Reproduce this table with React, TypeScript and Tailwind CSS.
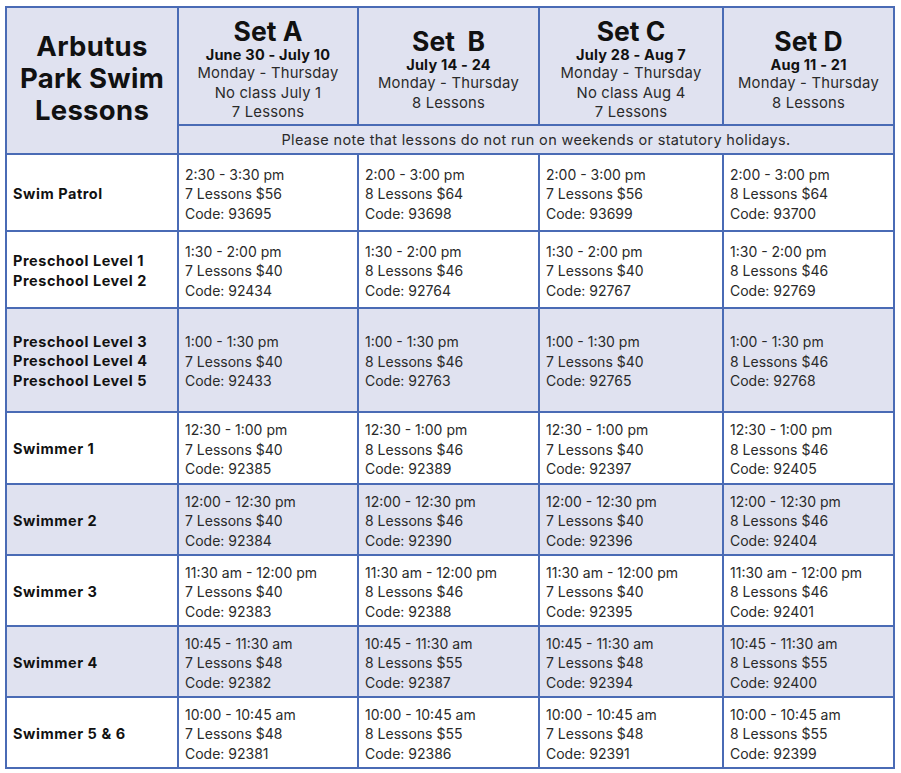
import React from "react";

type Cell = [string, string, string];

type Row = {
  label: string[];
  shaded: boolean;
  height: string;
  cells: Cell[];
};

const rows: Row[] = [
  {
    label: ["Swim Patrol"],
    shaded: false,
    height: "h-[77px]",
    cells: [
      ["2:30 - 3:30 pm", "7 Lessons $56", "Code: 93695"],
      ["2:00 - 3:00 pm", "8 Lessons $64", "Code: 93698"],
      ["2:00 - 3:00 pm", "7 Lessons $56", "Code: 93699"],
      ["2:00 - 3:00 pm", "8 Lessons $64", "Code: 93700"],
    ],
  },
  {
    label: ["Preschool Level 1", "Preschool Level 2"],
    shaded: false,
    height: "h-[77px]",
    cells: [
      ["1:30 - 2:00 pm", "7 Lessons $40", "Code: 92434"],
      ["1:30 - 2:00 pm", "8 Lessons $46", "Code: 92764"],
      ["1:30 - 2:00 pm", "7 Lessons $40", "Code: 92767"],
      ["1:30 - 2:00 pm", "8 Lessons $46", "Code: 92769"],
    ],
  },
  {
    label: ["Preschool Level 3", "Preschool Level 4", "Preschool Level 5"],
    shaded: true,
    height: "h-[104px]",
    cells: [
      ["1:00 - 1:30 pm", "7 Lessons $40", "Code: 92433"],
      ["1:00 - 1:30 pm", "8 Lessons $46", "Code: 92763"],
      ["1:00 - 1:30 pm", "7 Lessons $40", "Code: 92765"],
      ["1:00 - 1:30 pm", "8 Lessons $46", "Code: 92768"],
    ],
  },
  {
    label: ["Swimmer 1"],
    shaded: false,
    height: "h-[72px]",
    cells: [
      ["12:30 - 1:00 pm", "7 Lessons $40", "Code: 92385"],
      ["12:30 - 1:00 pm", "8 Lessons $46", "Code: 92389"],
      ["12:30 - 1:00 pm", "7 Lessons $40", "Code: 92397"],
      ["12:30 - 1:00 pm", "8 Lessons $46", "Code: 92405"],
    ],
  },
  {
    label: ["Swimmer 2"],
    shaded: true,
    height: "h-[71px]",
    cells: [
      ["12:00 - 12:30 pm", "7 Lessons $40", "Code: 92384"],
      ["12:00 - 12:30 pm", "8 Lessons $46", "Code: 92390"],
      ["12:00 - 12:30 pm", "7 Lessons $40", "Code: 92396"],
      ["12:00 - 12:30 pm", "8 Lessons $46", "Code: 92404"],
    ],
  },
  {
    label: ["Swimmer 3"],
    shaded: false,
    height: "h-[71px]",
    cells: [
      ["11:30 am - 12:00 pm", "7 Lessons $40", "Code: 92383"],
      ["11:30 am - 12:00 pm", "8 Lessons $46", "Code: 92388"],
      ["11:30 am - 12:00 pm", "7 Lessons $40", "Code: 92395"],
      ["11:30 am - 12:00 pm", "8 Lessons $46", "Code: 92401"],
    ],
  },
  {
    label: ["Swimmer 4"],
    shaded: true,
    height: "h-[71px]",
    cells: [
      ["10:45 - 11:30 am", "7 Lessons $48", "Code: 92382"],
      ["10:45 - 11:30 am", "8 Lessons $55", "Code: 92387"],
      ["10:45 - 11:30 am", "7 Lessons $48", "Code: 92394"],
      ["10:45 - 11:30 am", "8 Lessons $55", "Code: 92400"],
    ],
  },
  {
    label: ["Swimmer 5 & 6"],
    shaded: false,
    height: "h-[71px]",
    cells: [
      ["10:00 - 10:45 am", "7 Lessons $48", "Code: 92381"],
      ["10:00 - 10:45 am", "8 Lessons $55", "Code: 92386"],
      ["10:00 - 10:45 am", "7 Lessons $48", "Code: 92391"],
      ["10:00 - 10:45 am", "8 Lessons $55", "Code: 92399"],
    ],
  },
];

const sets = [
  { name: "Set A", dates: "June 30 - July 10", lines: ["Monday - Thursday", "No class July 1", "7 Lessons"] },
  { name: "Set  B", dates: "July 14 - 24", lines: ["Monday - Thursday", "8 Lessons"] },
  { name: "Set C", dates: "July 28 - Aug 7", lines: ["Monday - Thursday", "No class Aug 4", "7 Lessons"] },
  { name: "Set D", dates: "Aug 11 - 21", lines: ["Monday - Thursday", "8 Lessons"] },
];

export default function App() {
  return (
    <div className="w-[901px] h-[773px] bg-white pl-[5px] pt-[6px] font-['Inter',sans-serif] text-[#1c1c1c]">
      <table className="table-fixed border-collapse border-2 border-[#4a6bb5] w-[888px]">
        <colgroup>
          <col className="w-[172px]" />
          <col className="w-[180px]" />
          <col className="w-[181px]" />
          <col className="w-[184px]" />
          <col className="w-[171px]" />
        </colgroup>
        <thead>
          <tr className="h-[118px] bg-[#e0e2f0]">
            <th
              rowSpan={2}
              className="border-2 border-[#4a6bb5] text-center align-middle text-[27.5px] leading-[32px] font-bold tracking-[0.3px] text-[#111] pb-[6px]"
            >
              Arbutus
              <br />
              Park Swim
              <br />
              Lessons
            </th>
            {sets.map((s) => (
              <th key={s.name} className="border-2 border-[#4a6bb5] text-center align-middle font-normal pt-[8px]">
                <div className="text-[26.5px] leading-[28px] font-bold text-[#111] whitespace-pre">{s.name}</div>
                <div className="text-[14.5px] leading-[19px] font-bold tracking-[0.2px] text-[#111]">{s.dates}</div>
                {s.lines.map((l) => (
                  <div key={l} className="text-[14.8px] leading-[19.5px] tracking-[0.2px] text-[#2a2a2a]">
                    {l}
                  </div>
                ))}
              </th>
            ))}
          </tr>
          <tr className="h-[29px] bg-[#e0e2f0]">
            <th colSpan={4} className="border-2 border-[#4a6bb5] text-center align-middle font-normal text-[14.5px] tracking-[0.35px] text-[#2a2a2a]">
              Please note that lessons do not run on weekends or statutory holidays.
            </th>
          </tr>
        </thead>
        <tbody>
          {rows.map((r) => (
            <tr key={r.label[0]} className={`${r.height} ${r.shaded ? "bg-[#e0e2f0]" : "bg-white"}`}>
              <td className="border-2 border-[#4a6bb5] align-middle pl-[6px] pt-[2px] text-[14.5px] leading-[19.5px] font-bold tracking-[0.55px] text-[#111]">
                {r.label.map((l) => (
                  <div key={l}>{l}</div>
                ))}
              </td>
              {r.cells.map((c, i) => (
                <td key={i} className="border-2 border-[#4a6bb5] align-middle pl-[6px] pt-[3px] text-[14px] leading-[19.5px] text-[#2a2a2a]">
                  {c.map((l) => (
                    <div key={l}>{l}</div>
                  ))}
                </td>
              ))}
            </tr>
          ))}
        </tbody>
      </table>
    </div>
  );
}
